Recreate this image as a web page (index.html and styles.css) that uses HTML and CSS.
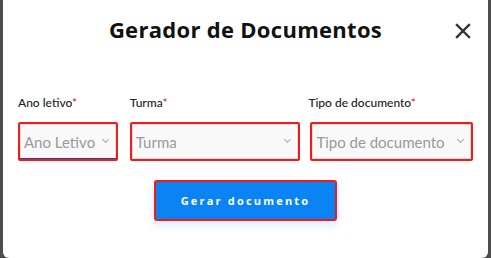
FILE: index.html
```html
<!DOCTYPE html>
<html lang="pt">
<head>
    <meta charset="UTF-8">
    <meta name="viewport" content="width=device-width, initial-scale=1.0">
    <title>Gerador de Documentos</title>
    <link rel="stylesheet" href="styles.css">
</head>
<body>
    <div class="modal">
        <div class="modal-header">
            <h2 class="modal-title">Gerador de Documentos</h2>
            <button class="close-btn" aria-label="Fechar">
                <svg width="16" height="16" viewBox="0 0 16 16">
                    <path d="M2 2 L14 14 M14 2 L2 14" stroke="#333" stroke-width="2.4" stroke-linecap="square"/>
                </svg>
            </button>
        </div>
        <div class="form-row">
            <div class="field field-ano">
                <label>Ano letivo<span class="req">*</span></label>
                <div class="select-box focused">
                    <span class="placeholder">Ano Letivo</span>
                    <span class="chevron"></span>
                </div>
            </div>
            <div class="field field-turma">
                <label>Turma<span class="req">*</span></label>
                <div class="select-box">
                    <span class="placeholder">Turma</span>
                    <span class="chevron"></span>
                </div>
            </div>
            <div class="field field-tipo">
                <label>Tipo de documento<span class="req">*</span></label>
                <div class="select-box">
                    <span class="placeholder">Tipo de documento</span>
                    <span class="chevron"></span>
                </div>
            </div>
        </div>
        <div class="actions">
            <button class="generate-btn">Gerar documento</button>
        </div>
    </div>
</body>
</html>
```

FILE: styles.css
```css
body {
    margin: 0;
    background-color: #4d4d4d;
    font-family: 'Lato', sans-serif;
    height: 258px;
    overflow: hidden;
}
.modal {
    background-color: #fff;
    margin: 0 3px;
    height: 258px;
    border-radius: 0 0 6px 6px;
    box-sizing: border-box;
    padding: 0 15px 0 15px;
}
.modal-header {
    position: relative;
    height: 95px;
    display: flex;
    justify-content: center;
    padding-top: 14px;
    box-sizing: border-box;
}
.modal-title {
    margin: 0;
    font-family: 'Open Sans', sans-serif;
    font-size: 22px;
    font-weight: 700;
    color: #111;
    line-height: 30px;
    letter-spacing: 0.3px;
}
.close-btn {
    position: absolute;
    right: 2px;
    top: 23px;
    border: none;
    background: none;
    padding: 0;
    width: 16px;
    height: 16px;
    cursor: pointer;
}
.form-row {
    display: flex;
    gap: 12px;
}
.field {
    display: flex;
    flex-direction: column;
}
.field-ano { width: 100px; }
.field-turma { width: 171px; }
.field-tipo { width: 163px; margin-left: -2px; }
.field label {
    font-size: 12px;
    font-weight: 500;
    color: #222;
    height: 16px;
    margin-bottom: 11px;
}
.field-tipo label {
    margin-left: -2px;
}
.req {
    color: #e02424;
}
.select-box {
    border: 2px solid #ee1c1c;
    border-radius: 2px;
    height: 39px;
    box-sizing: border-box;
    background-color: #f9f9f9;
    box-shadow: inset 0 0 0 1px #ddd;
    display: flex;
    align-items: center;
    justify-content: space-between;
    padding: 0 8px 0 4px;
}
.select-box.focused {
    box-shadow: inset 0 -1px 0 0 #3b3f9c, inset 0 0 0 1px #ddd;
}
.placeholder {
    font-size: 15px;
    color: #9a9a9a;
    white-space: nowrap;
}
.chevron {
    width: 4px;
    height: 4px;
    border-right: 1px solid #aaa;
    border-bottom: 1px solid #aaa;
    transform: rotate(45deg);
    margin-top: -4px;
}
.actions {
    display: flex;
    justify-content: center;
    margin-top: 19px;
}
.generate-btn {
    width: 183px;
    height: 41px;
    background-color: #0a84f2;
    border: 2px solid #ee1c1c;
    border-radius: 3px;
    color: #fff;
    font-family: 'Open Sans', sans-serif;
    font-weight: 700;
    font-size: 11px;
    letter-spacing: 2.2px;
    box-shadow: 0 4px 10px rgba(10, 100, 220, 0.15);
    cursor: pointer;
}
```
